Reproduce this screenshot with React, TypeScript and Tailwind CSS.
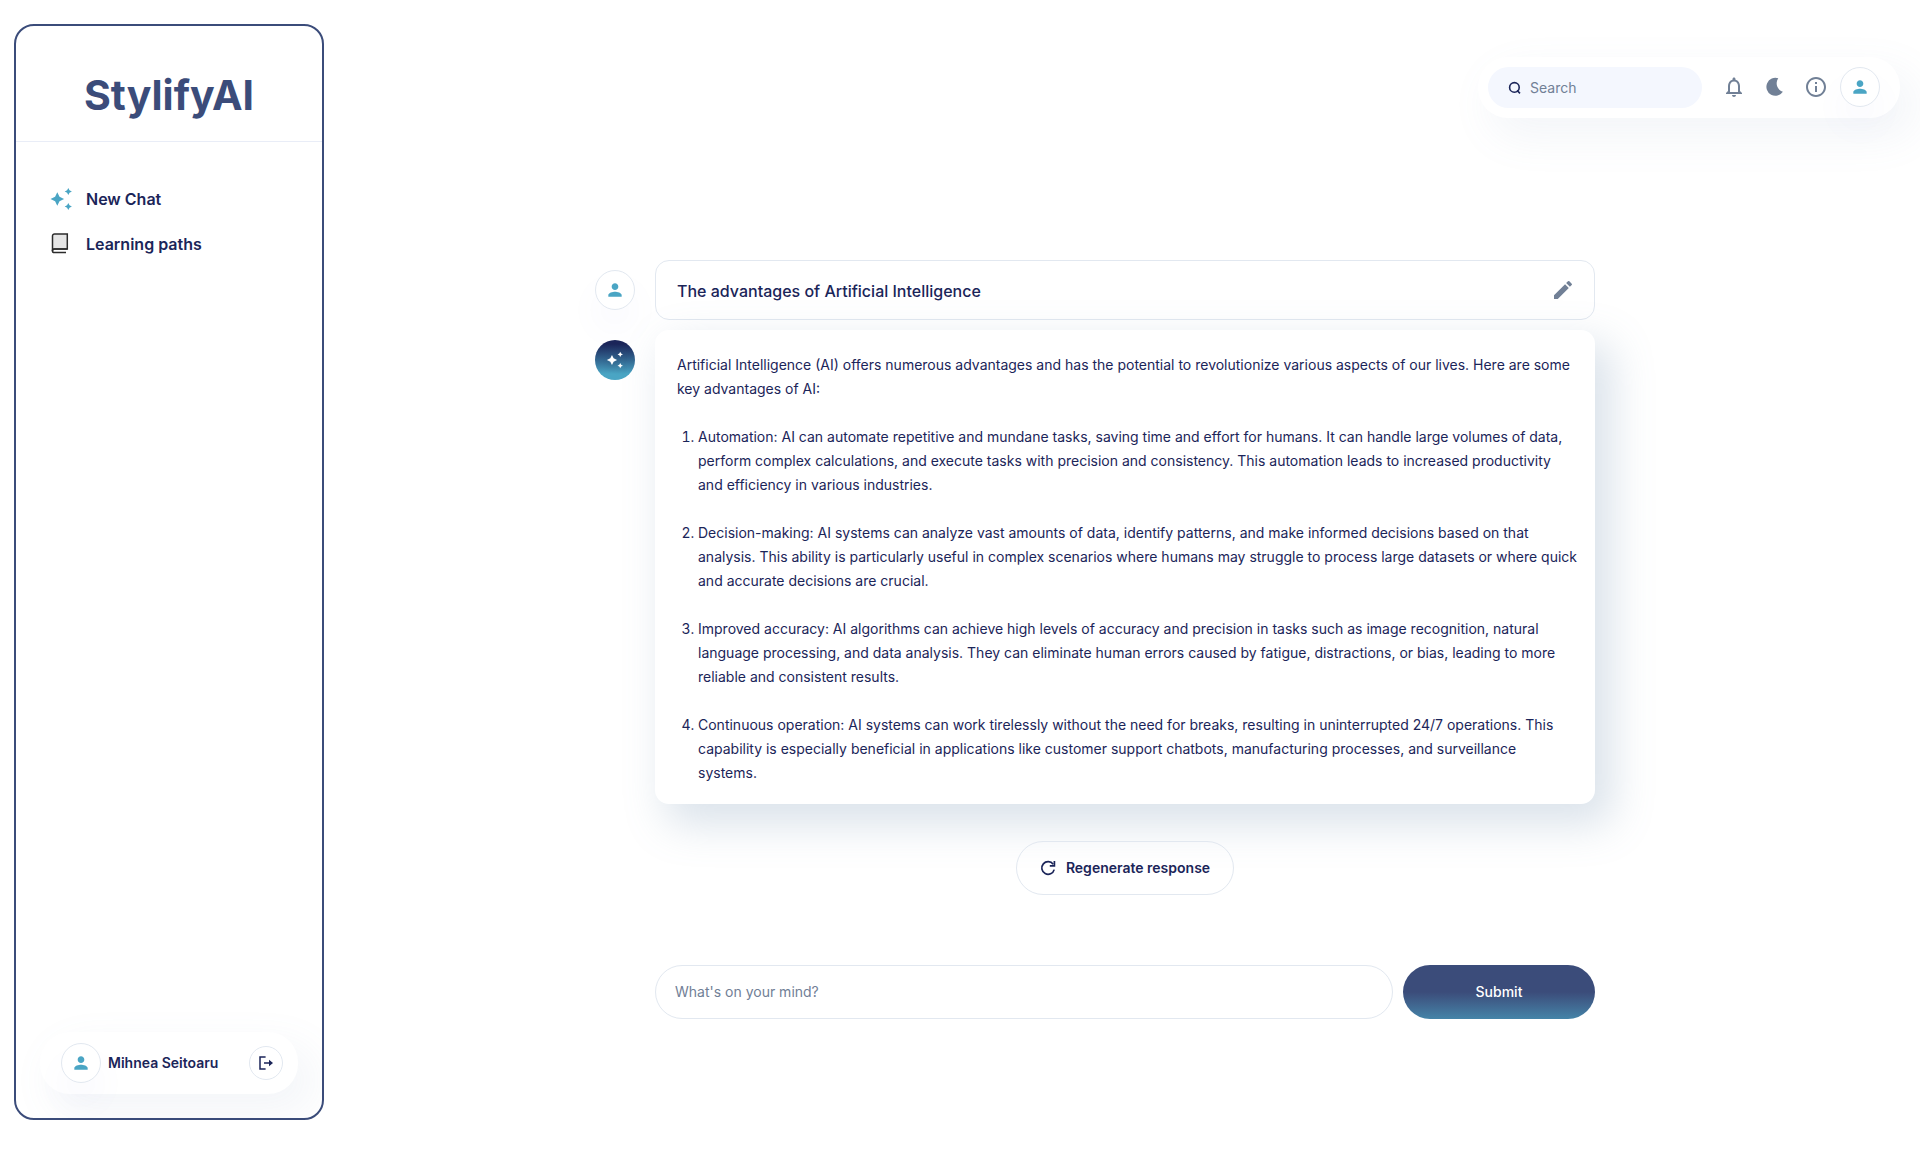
import type { ReactNode } from "react";
import { MdEdit, MdInfoOutline, MdNotificationsNone, MdPerson } from "react-icons/md";

const answers = [
  "Automation: AI can automate repetitive and mundane tasks, saving time and effort for humans. It can handle large volumes of data,\nperform complex calculations, and execute tasks with precision and consistency. This automation leads to increased productivity\nand efficiency in various industries.",
  "Decision-making: AI systems can analyze vast amounts of data, identify patterns, and make informed decisions based on that\nanalysis. This ability is particularly useful in complex scenarios where humans may struggle to process large datasets or where quick\nand accurate decisions are crucial.",
  "Improved accuracy: AI algorithms can achieve high levels of accuracy and precision in tasks such as image recognition, natural\nlanguage processing, and data analysis. They can eliminate human errors caused by fatigue, distractions, or bias, leading to more\nreliable and consistent results.",
  "Continuous operation: AI systems can work tirelessly without the need for breaks, resulting in uninterrupted 24/7 operations. This\ncapability is especially beneficial in applications like customer support chatbots, manufacturing processes, and surveillance\nsystems.",
];

function SparklesIcon({ className }: { className: string }) {
  return (
    <svg viewBox="0 0 24 24" fill="currentColor" className={className} aria-hidden="true">
      <path d="M9.3 5.2 11.5 9.8l4.6 2.2-4.6 2.2-2.2 4.6-2.2-4.6L2.5 12l4.6-2.2Z" />
      <path d="m20.3 1 1.2 2.3 2.4 1.2-2.4 1.2-1.2 2.3-1.2-2.3-2.4-1.2 2.4-1.2Z" />
      <path d="m20.3 16 1.2 2.3 2.4 1.2-2.4 1.2-1.2 2.3-1.2-2.3-2.4-1.2 2.4-1.2Z" />
    </svg>
  );
}

function BookIcon() {
  return (
    <svg width="20" height="24" viewBox="0 0 20 24" fill="none" stroke="#2b2b2b" strokeWidth="1.5" aria-hidden="true">
      <path d="M4.5 2h12.8v15H4.5a2 2 0 0 0-2 2V4a2 2 0 0 1 2-2Z" fill="#e5e5e5" />
      <path d="M17.3 17H4.2a1.6 1.6 0 0 0 0 3.6H16" />
    </svg>
  );
}

function MoonIcon() {
  return (
    <svg viewBox="0 0 24 24" fill="currentColor" className="size-6" aria-hidden="true">
      <path d="M15.3 3.3A9 9 0 1 0 19.9 16.8A8.8 8.8 0 0 1 15.3 3.3Z" />
    </svg>
  );
}

function LogoutIcon() {
  return (
    <svg width="16" height="16" viewBox="0 0 16 16" fill="none" stroke="#1b2559" strokeWidth="1.5" aria-hidden="true">
      <path d="M7.6 2H2v12h5.6M6 8h6" />
      <path d="m11 4.8 4 3.2-4 3.2Z" fill="#1b2559" stroke="none" />
    </svg>
  );
}

function SearchIcon() {
  return (
    <svg width="14" height="14" viewBox="0 0 14 14" fill="none" stroke="#1b2559" strokeWidth="1.6" aria-hidden="true">
      <circle cx="6.4" cy="6.4" r="4.8" />
      <path d="m9 9.4 3 3" />
    </svg>
  );
}

function ReloadIcon() {
  return (
    <svg width="16" height="16" viewBox="0 0 16 16" fill="none" stroke="#1b2559" strokeWidth="1.7" aria-hidden="true">
      <path d="M14.2 9.6A6.3 6.3 0 1 1 13.2 4.3" />
      <path d="M14.4 1v4.9H9.8" />
    </svg>
  );
}

function Avatar() {
  return (
    <span className="flex size-10 shrink-0 items-center justify-center rounded-full border border-[#e2e8f0] shadow-[0_20px_28px_4px_rgba(112,112,220,0.03)]">
      <MdPerson className="size-5 text-[#4aa5c4]" />
    </span>
  );
}

function NavLink({ icon, children }: { icon: ReactNode; children: ReactNode }) {
  return (
    <a href="#" className="flex items-center gap-3.5 text-base leading-6 font-semibold">
      <span className="flex w-6 items-center justify-center">{icon}</span>
      {children}
    </a>
  );
}

export default function App() {
  return (
    <div className="flex min-h-screen bg-white font-['Inter',sans-serif] text-[#1b2559]">
      <aside className="mt-6 mb-9 ml-3.5 flex w-[310px] shrink-0 flex-col overflow-hidden rounded-[20px] border-2 border-[#3b4c7a]">
        <h1 className="border-b border-[#e9edf7] pt-[42px] pb-[18px] text-center text-[41px] leading-[55px] font-bold text-[#3b4c7a]">
          StylifyAI
        </h1>
        <nav className="mt-[45px] flex flex-col gap-[21px] pl-8">
          <NavLink icon={<SparklesIcon className="size-6 text-[#4aa5c4]" />}>New Chat</NavLink>
          <NavLink icon={<BookIcon />}>Learning paths</NavLink>
        </nav>
        <div className="mt-auto mr-6 mb-6 ml-6 flex h-[62px] items-center rounded-[30px] pr-[15px] pl-[21px] shadow-[14px_17px_40px_4px_rgba(112,144,176,0.08)]">
          <Avatar />
          <span className="ml-[7px] text-sm font-semibold">Mihnea Seitoaru</span>
          <button type="button" aria-label="Log out" className="ml-auto flex size-[34px] items-center justify-center rounded-full border border-[#e2e8f0]">
            <LogoutIcon />
          </button>
        </div>
      </aside>

      <div className="flex min-w-0 flex-1 flex-col">
        <header className="mt-[57px] mr-5 flex h-[61px] items-center self-end rounded-[30px] bg-white pr-5 pl-2.5 shadow-[14px_17px_40px_4px_rgba(112,144,176,0.08)]">
          <label className="flex h-[41px] w-[214px] items-center gap-2 rounded-[30px] bg-[#f4f7fe] pl-5">
            <SearchIcon />
            <input type="text" aria-label="Search" placeholder="Search" className="min-w-0 flex-1 bg-transparent text-sm outline-none placeholder:text-[#718096]" />
          </label>
          <div className="ml-5 flex items-center pb-0.5 text-[#718096]">
            <button type="button" aria-label="Notifications" className="mr-[17px]"><MdNotificationsNone className="size-6" /></button>
            <button type="button" aria-label="Dark mode" className="mr-[17px]"><MoonIcon /></button>
            <button type="button" aria-label="Information" className="mr-3"><MdInfoOutline className="size-6" /></button>
            <button type="button" aria-label="Account"><Avatar /></button>
          </div>
        </header>

        <div className="flex justify-center pt-[142px] pr-[54px]">
          <main className="grid w-[1000px] grid-cols-[40px_1fr] gap-x-5">
            <div className="pt-2.5"><Avatar /></div>
            <div className="flex h-[60px] items-center justify-between rounded-[14px] border border-[#e2e8f0] pt-0.5 pr-[19px] pl-[21px]">
              <h2 className="text-base font-medium">The advantages of Artificial Intelligence</h2>
              <button type="button" aria-label="Edit prompt" className="pb-0.5"><MdEdit className="size-6 text-[#718096]" /></button>
            </div>

            <div className="mt-5 flex size-10 items-center justify-center rounded-full bg-linear-to-b from-[#1b2559] from-10% to-[#4aa5c4] to-85% pr-0.5">
              <SparklesIcon className="size-[18px] text-white drop-shadow-md" />
            </div>
            <div className="mt-2.5 rounded-[14px] bg-white pt-[23px] pr-2 pb-[19px] pl-[22px] text-sm leading-6 shadow-[14px_17px_40px_4px_rgba(112,144,176,0.25)]">
              <p>Artificial Intelligence (AI) offers numerous advantages and has the potential to revolutionize various aspects of our lives. Here are some key advantages of AI:</p>
              <ol className="mt-6 flex list-decimal flex-col gap-6 pl-[21px] whitespace-pre-line">
                {answers.map((text) => <li key={text}>{text}</li>)}
              </ol>
            </div>

            <button type="button" className="col-start-2 mt-[37px] flex h-[54px] items-center gap-2.5 justify-self-center rounded-[45px] border border-[#e2e8f0] px-[23px] text-sm font-semibold">
              <ReloadIcon />
              Regenerate response
            </button>

            <form className="col-start-2 mt-[70px] flex gap-2.5" onSubmit={(event) => event.preventDefault()}>
              <input type="text" aria-label="Message" placeholder="What's on your mind?" className="h-[54px] min-w-0 flex-1 rounded-[45px] border border-[#e2e8f0] px-[19px] pb-0.5 text-sm outline-none placeholder:text-[#718096]" />
              <button type="submit" className="h-[54px] w-48 rounded-[45px] bg-linear-to-b from-[#3b4c7a] from-50% to-[#4484a8] text-sm font-medium text-white">Submit</button>
            </form>
          </main>
        </div>
      </div>
    </div>
  );
}
